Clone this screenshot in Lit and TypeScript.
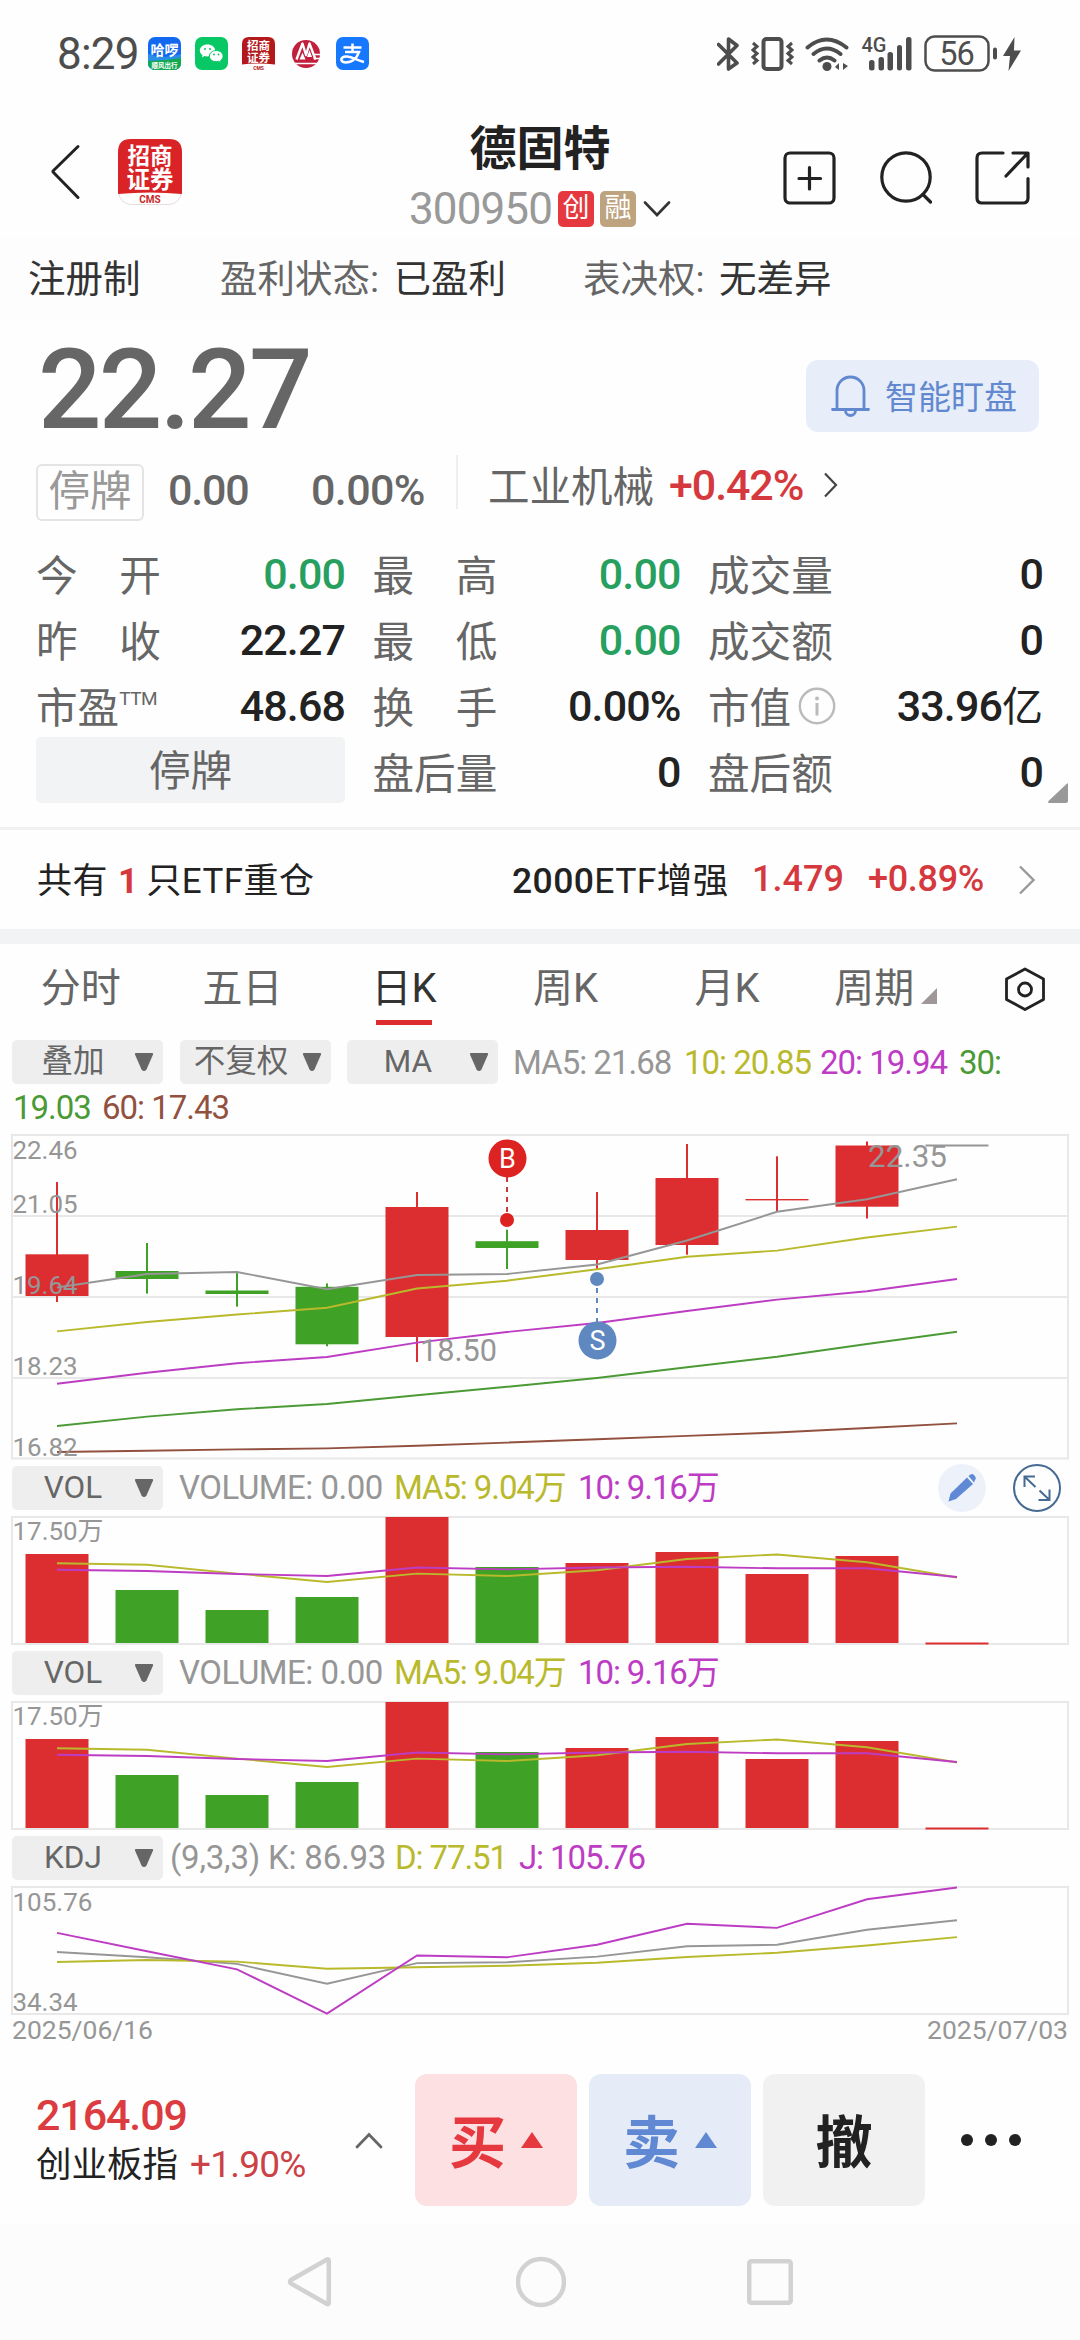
import { LitElement, html, svg, css } from "lit";
import { customElement, property } from "lit/decorators.js";

const RED = "#dc2e30";
const GREEN = "#3fa126";
const GRAY = "#969696";
const YELLOW = "#b9b92c";
const MAGENTA = "#bd3cc4";
const LEAF = "#4b9a36";
const BROWN = "#92503f";
const FRAME = "#e8e8e8";

const FIRST_X = 57;
const STEP = 90;
const HALF = 31.5;

interface Candle {
  high: number;
  low: number;
  top: number;
  bottom: number;
  color: string;
}

const CANDLES: Candle[] = [
  { high: 1182, low: 1302, top: 1254.3, bottom: 1296, color: RED },
  { high: 1243, low: 1293.6, top: 1271, bottom: 1279, color: GREEN },
  { high: 1273, low: 1306.7, top: 1290.5, bottom: 1294, color: GREEN },
  { high: 1283.4, low: 1346.3, top: 1286.8, bottom: 1344.3, color: GREEN },
  { high: 1192, low: 1362, top: 1207, bottom: 1337, color: RED },
  { high: 1229.7, low: 1269, top: 1241.2, bottom: 1248, color: GREEN },
  { high: 1192, low: 1270, top: 1230, bottom: 1260, color: RED },
  { high: 1144, low: 1254.7, top: 1178, bottom: 1245, color: RED },
  { high: 1156.3, low: 1211.4, top: 1199, bottom: 1200.4, color: RED },
  { high: 1141.5, low: 1218.5, top: 1145.5, bottom: 1206.7, color: RED },
];

const MA_LINES: [string, number[]][] = [
  [GRAY, [1287.5, 1274, 1272, 1289.2, 1275, 1274, 1264.5, 1240.5, 1211.8, 1199.3, 1179.3]],
  [YELLOW, [1331.4, 1322, 1314.5, 1307.8, 1288.5, 1280.7, 1269.2, 1256.7, 1250.6, 1237.5, 1226.6]],
  [MAGENTA, [1383.8, 1372.7, 1363.2, 1357, 1342.6, 1332, 1323, 1311, 1299.6, 1291.2, 1279]],
  [LEAF, [1426, 1416.6, 1409.2, 1404, 1395.3, 1386.8, 1378, 1367.2, 1356.8, 1344, 1331.8]],
  [BROWN, [1452, 1450.7, 1449.4, 1448.4, 1445.7, 1442.6, 1439.2, 1435.9, 1432.5, 1428, 1423.4]],
];

/* Volume panel values are offsets below the top edge of the panel frame. */
const VOLUMES: [number, string][] = [
  [37, RED], [73, GREEN], [93, GREEN], [80, GREEN], [0, RED], [50, GREEN],
  [46, RED], [35, RED], [57, RED], [39, RED], [125.5, RED],
];
const VOL_MA5 = [46.3, 47.8, 56.6, 65, 56.6, 59, 53.2, 42, 37.5, 45.2, 60.5];
const VOL_MA10 = [52.8, 54, 57, 59, 50.5, 52.4, 50.5, 49.8, 51.3, 51.3, 60];

const K_LINE = [65, 70.3, 76.9, 96.8, 76.1, 75.3, 69.6, 59.3, 57.7, 42.8, 33.3];
const D_LINE = [75, 73, 74.6, 81.8, 80.3, 78.8, 75.7, 70, 65.8, 58.5, 50.1];
const J_LINE = [45.9, 64.3, 82.3, 126.6, 68.5, 70.3, 57.7, 36.7, 40.9, 12.3, 0.5];

const cx = (i: number) => FIRST_X + STEP * i;
const line = (values: number[], color: string) =>
  svg`<polyline points=${values.map((y, i) => `${cx(i)},${y}`).join(" ")} fill="none" stroke=${color} stroke-width="1.9"/>`;
const label = (x: number, baseline: number, text: string, width: number, size = 26.5) =>
  svg`<text x=${x} y=${baseline} font-size=${size} fill=${GRAY} textLength=${width} lengthAdjust="spacingAndGlyphs">${text}</text>`;

@customElement("price-chart")
class PriceChart extends LitElement {
  static styles = css`
    :host { display: block; }
    svg { display: block; font-family: Roboto, "Noto Sans CJK SC", sans-serif; }
  `;
  render() {
    return html`<svg width="1080" height="332" viewBox="0 1130 1080 332">
      <g stroke=${FRAME} stroke-width="2" fill="none">
        <rect x="12" y="1135" width="1056" height="323.5"/>
        <path d="M12 1216H1068M12 1297H1068M12 1378H1068"/>
      </g>
      ${CANDLES.map((c, i) => svg`
        <rect x=${cx(i) - 1} y=${c.high} width="2" height=${c.low - c.high} fill=${c.color}/>
        <rect x=${cx(i) - HALF} y=${c.top} width=${HALF * 2} height=${c.bottom - c.top} fill=${c.color}/>`)}
      <rect x=${cx(10) - HALF} y="1144.5" width="63" height="2" fill=${GRAY}/>
      ${MA_LINES.map(([color, values]) => line(values, color))}
      ${label(12.5, 1158.5, "22.46", 65)}
      ${label(12.5, 1212.5, "21.05", 65)}
      ${label(12.5, 1293.5, "19.64", 65)}
      ${label(12.5, 1374.5, "18.23", 65)}
      ${label(12.5, 1455.5, "16.82", 65)}
      ${label(420, 1361, "18.50", 77, 32)}
      ${label(868, 1167, "22.35", 79, 32)}
      <path d="M507 1177V1213" stroke="#c83a3a" stroke-width="2" stroke-dasharray="5 5"/>
      <circle cx="507.500" cy="1158.4" r="19" fill="#dd2222"/>
      <circle cx="507" cy="1220" r="7" fill="#dd2222"/>
      <text x="507.500" y="1168" font-size="27" fill="#fff" text-anchor="middle">B</text>
      <path d="M597 1288V1322" stroke="#5f88c0" stroke-width="2" stroke-dasharray="5 5"/>
      <circle cx="597.500" cy="1340.5" r="19" fill="#5f88c0"/>
      <circle cx="597" cy="1279" r="7" fill="#5f88c0"/>
      <text x="597.500" y="1350" font-size="27" fill="#fff" text-anchor="middle">S</text>
    </svg>`;
  }
}

@customElement("volume-chart")
class VolumeChart extends LitElement {
  static styles = css`
    :host { display: block; }
    svg { display: block; font-family: Roboto, "Noto Sans CJK SC", sans-serif; }
  `;
  render() {
    return html`<svg width="1080" height="133" viewBox="0 -3 1080 133">
      <rect x="12" y="0" width="1056" height="127" stroke=${FRAME} stroke-width="2" fill="none"/>
      ${label(12.5, 22.5, "17.50万", 91)}
      ${VOLUMES.map(([top, color], i) => svg`
        <rect x=${cx(i) - HALF} y=${top} width="63" height=${Math.max(126 - top, 2)} fill=${color}/>`)}
      ${line(VOL_MA5, YELLOW)} ${line(VOL_MA10, MAGENTA)}
    </svg>`;
  }
}

@customElement("kdj-chart")
class KdjChart extends LitElement {
  static styles = css`
    :host { display: block; }
    svg { display: block; font-family: Roboto, "Noto Sans CJK SC", sans-serif; }
  `;
  render() {
    return html`<svg width="1080" height="133" viewBox="0 -3 1080 133">
      <rect x="12" y="0" width="1056" height="127" stroke=${FRAME} stroke-width="2" fill="none"/>
      ${label(12.5, 23.5, "105.76", 80)}
      ${label(12.5, 124, "34.34", 65)}
      ${line(K_LINE, GRAY)} ${line(D_LINE, YELLOW)} ${line(J_LINE, MAGENTA)}
    </svg>`;
  }
}

@customElement("drop-select")
class DropSelect extends LitElement {
  @property() label = "";
  static styles = css`
    :host { display: block; flex: none; }
    .box {
      display: flex; align-items: center; width: 151px; height: 44px; box-sizing: border-box;
      padding-right: 9px; border-radius: 5px; background: #eee; color: #666; font-size: 31.500px; letter-spacing: 0;
    }
    .text { flex: 1; text-align: center; white-space: nowrap; line-height: 44px; }
    svg { display: block; flex: none; }
  `;
  render() {
    return html`<div class="box">
      <span class="text">${this.label}</span>
      <svg width="20" height="20" viewBox="0 0 20 20"><path d="M2 1h16q1.5 0 1 1.500l-6.500 15q-2.500 3-5 0l-6.500-15q-.5-1.500 1-1.500z" fill="#666"/></svg>
    </div>`;
  }
}

const QUOTES: { name: string; value: string; green?: boolean; sup?: string; info?: boolean }[][] = [
  [
    { name: "今　开", value: "0.00", green: true },
    { name: "最　高", value: "0.00", green: true },
    { name: "成交量", value: "0" },
  ],
  [
    { name: "昨　收", value: "22.27" },
    { name: "最　低", value: "0.00", green: true },
    { name: "成交额", value: "0" },
  ],
  [
    { name: "市盈", value: "48.68", sup: "TTM" },
    { name: "换　手", value: "0.00%" },
    { name: "市值", value: "33.96亿", info: true },
  ],
  [
    { name: "", value: "停牌" },
    { name: "盘后量", value: "0" },
    { name: "盘后额", value: "0" },
  ],
];

@customElement("app-root")
class AppRoot extends LitElement {
  static styles = css`
    :host {
      display: block; width: 1080px; height: 2340px; overflow: hidden; background: #fefefe; color: #222;
      font-family: Roboto, "Noto Sans CJK SC", sans-serif;
    }
    svg { display: block; flex: none; }
    span { white-space: nowrap; }
    .status { display: flex; align-items: center; height: 107px; padding: 0 59px 0 57px; box-sizing: border-box; }
    .time { width: 91px; font-size: 44px; letter-spacing: -0.8px; color: #4d4d4d; }
    .apps { display: flex; gap: 14px; }
    .sys { display: flex; align-items: center; margin-left: auto; }
    .sys .vib { margin-left: 12px; }
    .sys .wifi { margin-left: 11px; }
    .sys .sig { margin-left: 12px; }
    .sys .bat { margin-left: 12px; }
    .sys .bolt { margin-left: 6px; }

    .header { display: grid; grid-template-columns: 390px 300px 390px; height: 130px; }
    .h-left { display: flex; align-items: center; padding-left: 50px; padding-bottom: 3px; gap: 37px; }
    .h-mid { display: flex; flex-direction: column; align-items: center; }
    .title { font-size: 47px; font-weight: 700; line-height: 60px; margin-top: 12px; }
    .code { display: flex; align-items: center; height: 60px; color: #999; }
    .code .num { font-size: 44px; letter-spacing: -0.9px; width: 149px; }
    .tag { width: 36px; height: 36px; border-radius: 5px; color: #fff; font-size: 27px; line-height: 34px; text-align: center; }
    .tag.red { background: #e5393f; }
    .tag.tan { background: #bda37e; margin-left: 6px; margin-right: 7px; }
    .h-right { display: flex; align-items: center; padding: 9px 0 0 92px; gap: 42px; }

    .facts { display: flex; align-items: center; height: 82px; padding-bottom: 5px; box-sizing: border-box; background: #fdfdfd; font-size: 37.5px; color: #333; }
    .facts .f1 { width: 192px; padding-left: 28px; box-sizing: content-box; }
    .facts .f2 { width: 363px; }
    .facts i { font-style: normal; color: #666; margin-right: 5px; }

    .price-row { display: flex; justify-content: space-between; align-items: flex-start; height: 131px; padding: 31px 41px 0 36px; box-sizing: border-box; }
    .price { font-size: 112px; line-height: 80px; font-weight: 500; letter-spacing: -2.8px; color: #666; margin-left: 2px; }
    .watch { display: flex; align-items: center; gap: 14px; width: 233px; height: 72px; margin-top: 10px; padding-left: 24px; box-sizing: border-box; border-radius: 12px; background: #e7edf9; color: #6289d0; font-size: 33px; }
    .watch span { padding-bottom: 3px; }

    .change { display: flex; align-items: center; height: 80px; padding-left: 36px; color: #666; font-size: 43px; font-weight: 500; }
    .halt { width: 108px; height: 57px; box-sizing: border-box; border: 2.5px solid #e4e4e4; border-radius: 6px; margin-top: 5px; text-align: center; line-height: 51px; font-size: 41.500px; color: #999; font-weight: 400; }
    .change .abs { width: 143px; margin-left: 24px; letter-spacing: -1.2px; }
    .change .pct { width: 145px; letter-spacing: -0.6px; }
    .bar { width: 2px; height: 54px; background: #eee; margin-bottom: 16px; }
    .sector { display: flex; align-items: center; margin: 0 0 10px 30px; font-weight: 400; font-size: 41.500px; }
    .sector span { margin-bottom: 3px; }
    .sector b { font-weight: 500; color: #d5393e; font-size: 43px; width: 154px; margin-left: 15px; letter-spacing: -1.1px; }

    .quotes { position: relative; display: grid; grid-template-columns: 309px 308px 335px; column-gap: 27.5px; grid-auto-rows: 66px; padding: 11px 36px 22px; border-bottom: 3px solid #f1f1f1; }
    .q { display: flex; align-items: center; justify-content: space-between; font-size: 41.600px; color: #666; }
    .q .name { display: flex; align-items: center; margin-bottom: 3px; }
    .q .sup { font-size: 19px; letter-spacing: -0.5px; margin-bottom: 12px; }
    .q .info { margin-left: 7px; margin-top: 3px; }
    .q .val { font-size: 43px; line-height: 66px; font-weight: 500; color: #222; letter-spacing: -0.9px; }
    .q .val i { font-style: normal; font-weight: 400; font-size: 41px; line-height: 40px; letter-spacing: 0; }
    .q .green { color: #279f5f; }
    .q.halted { justify-content: center; background: #f2f3f5; border-radius: 5px; padding-bottom: 5px; margin: -2px 0 2px; box-sizing: border-box; }
    .corner { position: absolute; right: 12px; top: 253px; }

    .etf { display: flex; align-items: center; height: 99px; font-size: 35px; padding-left: 37px; box-sizing: border-box; }
    .etf .l, .etf .n { padding-bottom: 4px; letter-spacing: 0.4px; }
    .etf .l { width: 475px; }
    .etf .l b { color: #d5393e; font-weight: 700; margin: 0 -1px 0 1px; }
    .etf .n { width: 240px; font-size: 35.500px; letter-spacing: 0.4px; }
    .etf .n b { font-weight: 500; }
    .etf .p { width: 116px; color: #d5393e; font-weight: 500; font-size: 36px; }
    .etf .c { width: 150px; color: #d5393e; font-weight: 500; font-size: 36px; letter-spacing: -0.3px; }
    .etf .p, .etf .c { padding-bottom: 2px; }
    .band { height: 15px; background: #f2f3f5; }

    .tabs { display: grid; grid-template-columns: repeat(6, 161.600px) 1fr; height: 88px; }
    .tab { display: flex; flex-direction: column; align-items: center; color: #666; font-size: 40px; line-height: 89px; }
    .tab.on { color: #333; }
    .tab .rule { width: 56px; height: 4.500px; background: #dc2c30; margin-top: -13px; }
    .tab.more { flex-direction: row; justify-content: center; align-items: center; gap: 7px; padding-right: 6px; }
    .tab.more svg { margin-top: 15px; }
    .gear { display: flex; align-items: center; padding-left: 34px; }

    .ma { display: grid; grid-template-columns: 168px 167px 166px 171px 136px 139px 1fr; padding: 7px 0 0 12px; height: 98px; box-sizing: border-box; grid-template-rows: 46px 45px; align-items: center; font-size: 33px; letter-spacing: -1px; }
    .ma .wrap { grid-column: 1 / -1; padding-left: 1px; }
    .ma .wrap span { display: inline-block; width: 89px; }
    .gray { color: #969696; }
    .yellow { color: #b9b92c; }
    .magenta { color: #bd3cc4; }
    .leaf { color: #4b9a36; }
    .brown { color: #92503f; }

    .ind { display: grid; grid-template-columns: 167px 215px 184px 1fr auto auto; align-items: center; height: 52px; padding: 0 19px 0 12px; font-size: 33px; line-height: 52px; letter-spacing: -0.5px; }
    .ind .yellow, .ind .magenta { letter-spacing: -1.1px; }
    .ind.kdj { grid-template-columns: 158px 225px 124px 1fr; }
    .ind.kdj .gray { letter-spacing: -0.2px; }
    .ind .pen { margin-right: 27px; }
    .dates { display: flex; justify-content: space-between; height: 25px; line-height: 25px; padding: 0 12px; font-size: 26.500px; color: #969696; }

    .trade { display: flex; align-items: center; height: 182px; padding: 14px 0 0 36px; box-sizing: border-box; }
    .index { width: 319px; }
    .index .v { display: block; font-size: 43px; font-weight: 500; color: #dc3c40; line-height: 54px; letter-spacing: -1.1px; }
    .index .d { display: block; font-size: 35.500px; line-height: 46px; padding-bottom: 4px; }
    .index .d i { font-style: normal; color: #cc4145; margin-left: 12px; font-size: 37px; letter-spacing: -0.8px; }
    .btn { display: flex; align-items: center; justify-content: center; gap: 15px; width: 162px; height: 132px; border-radius: 12px; font-size: 57px; font-weight: 700; margin-right: 12px; }
    .btn span { padding-bottom: 4px; }
    .btn.buy { background: #fde0e2; color: #e5393f; margin-left: 32px; }
    .btn.sell { background: #e5ecf8; color: #6188d3; }
    .btn.undo { background: #f1f1f1; color: #222; }
    .more-dots { margin-left: 24px; }
    .nav { display: flex; align-items: center; height: 116px; background: #fcfcfc; padding-left: 287px; }
    .nav .home { margin-left: 183px; }
    .nav .recent { margin-left: 181px; }
  `;

  private status() {
    return html`<div class="status">
      <span class="time">8:29</span>
      <div class="apps">
        <svg width="33" height="33" viewBox="0 0 33 33">
          <defs><clipPath id="r"><rect width="33" height="33" rx="7"/></clipPath></defs>
          <g clip-path="url(#r)"><rect width="33" height="33" fill="#1268ee"/><path d="M0 17q16 6 33 0v16H0z" fill="#2b8fe8"/><path d="M0 24q16 0 33-3v12H0z" fill="#12a94f"/></g>
          <text x="16.500" y="18" font-size="14" font-weight="700" fill="#fff" text-anchor="middle">哈啰</text>
          <text x="16.500" y="31" font-size="6.500" font-weight="700" fill="#fff" text-anchor="middle">顺风出行</text>
        </svg>
        <svg width="33" height="33" viewBox="0 0 33 33">
          <rect width="33" height="33" rx="7" fill="#08c865"/>
          <path d="M12.500 7.500c-4.500 0-7.700 2.700-7.700 6 0 1.900 1 3.500 2.700 4.600l-.7 2.300 2.700-1.300c4 1.200 10.500-.8 10.700-5.600 0-3.300-3.300-6-7.700-6z" fill="#fff"/>
          <path d="M21.300 13.500c-4 0-6.900 2.500-6.900 5.600s2.900 5.600 6.900 5.600c.9 0 1.700-.1 2.400-.3l2.400 1.200-.6-2c1.600-1 2.600-2.600 2.600-4.500 0-3.100-3-5.600-6.800-5.600z" fill="#fff" stroke="#08c865" stroke-width="1"/>
          <g fill="#08c865"><circle cx="10" cy="12" r="1"/><circle cx="15" cy="12" r="1"/><circle cx="19" cy="17.500" r=".9"/><circle cx="23.500" cy="17.500" r=".9"/></g>
        </svg>
        <svg width="33" height="33" viewBox="0 0 33 33">
          <path d="M7 0h19q7 0 7 7v20.500q-16.500-2-33 0V7Q0 0 7 0z" fill="#b3181a"/>
          <text x="16.500" y="13" font-size="11.500" font-weight="700" fill="#fff" text-anchor="middle">招商</text>
          <text x="16.500" y="24.500" font-size="11.500" font-weight="700" fill="#fff" text-anchor="middle">证券</text>
          <text x="16.500" y="32.500" font-size="5" font-weight="700" fill="#b3181a" text-anchor="middle">CMS</text>
        </svg>
        <svg width="33" height="33" viewBox="0 0 33 33">
          <circle cx="17" cy="17" r="14" fill="#c11f3c"/>
          <path d="M7.500 22.500 13.500 6.500 17 18 20.500 6.500 26.500 22.500" stroke="#fff" stroke-width="2.400" fill="none" stroke-linejoin="round"/>
          <path d="M10.500 22.500l3-7 3 7zM18 20l2.500-7 2.500 7z" fill="#fff"/>
          <path d="M6 26.500h22M24.500 17.500H32M24.500 21.500H32" stroke="#fff" stroke-width="1.600" fill="none"/>
        </svg>
        <svg width="33" height="33" viewBox="0 0 33 33">
          <rect width="33" height="33" rx="7" fill="#1677ff"/>
          <path d="M7.500 10.500h18M16.500 6.500v8.500M9 15h14c-2 6-7 10.500-13.500 10.500-6.500-.5-5-6.500 1.500-6 6 .5 10 4 17 5.500" stroke="#fff" stroke-width="2.500" fill="none"/>
        </svg>
      </div>
      <div class="sys">
        <svg width="22" height="34" viewBox="0 0 22 34"><path d="M1.500 7.500 20 26l-8.500 6V2L20 8.500 1.500 27" fill="none" stroke="#4d4d4d" stroke-width="3.600" stroke-linejoin="round" stroke-linecap="round"/></svg>
        <svg class="vib" width="43" height="34" viewBox="0 0 43 34" fill="none" stroke="#4d4d4d"><rect x="12.500" y="2" width="18" height="30" rx="3" stroke-width="4"/><path d="M2 6l4 3.500-4 3.500 4 3.500-4 3.500 4 3.500-4 3.500M41 6l-4 3.500 4 3.500-4 3.500 4 3.500-4 3.500 4 3.500" stroke-width="3"/></svg>
        <svg class="wifi" width="44" height="34" viewBox="0 0 44 34" fill="none" stroke="#4d4d4d" stroke-width="3.900" stroke-linecap="round"><path d="M2.500 10.500q19-16 39 0M8.500 17q13-11 27 0M14.500 23.500q7.500-6 15 0"/><circle cx="22" cy="29.500" r="4.500" fill="#4d4d4d" stroke="none"/><path d="M34 26v7l-4-3zM38 33v-7l5 3z" fill="#4d4d4d" stroke="none"/></svg>
        <svg class="sig" width="51" height="55" viewBox="-1 -10 51 55" fill="#4d4d4d"><text x="-0.500" y="16" font-size="21" font-weight="500" textLength="25" lengthAdjust="spacingAndGlyphs">4G</text><rect x="7" y="24" width="5.500" height="10.500" rx="2.500"/><rect x="16.500" y="21" width="5.500" height="13.500" rx="2.500"/><rect x="25.500" y="16" width="5.500" height="18.500" rx="2.500"/><rect x="35" y="9" width="5" height="25.500" rx="2.500"/><rect x="44" y="1" width="5.500" height="33.500" rx="2.500"/></svg>
        <svg class="bat" width="73" height="37" viewBox="0 0 73 37"><rect x="1.500" y="1.500" width="63" height="34" rx="9" fill="none" stroke="#4d4d4d" stroke-width="2.500"/><rect x="69" y="12.500" width="4" height="12" rx="2" fill="#4d4d4d"/><text x="32.500" y="30" font-size="32.500" fill="#4d4d4d" text-anchor="middle" letter-spacing="-1">56</text></svg>
        <svg class="bolt" width="18" height="34" viewBox="0 0 18 34"><path d="M11.500 0 0 19h7l-1.500 15L18 13.500h-7z" fill="#4d4d4d"/></svg>
      </div>
    </div>`;
  }

  private header() {
    return html`<div class="header">
      <div class="h-left">
        <svg width="31" height="56" viewBox="0 0 31 56"><path d="M28 2.500 3.500 26.500q-1 1 0 2L28 53.500" fill="none" stroke="#222" stroke-width="3" stroke-linecap="round"/></svg>
        <svg width="64" height="66" viewBox="0 0 64 66">
          <rect x=".5" y=".5" width="63" height="65" rx="13" fill="#fff" stroke="#e2dcdc"/>
          <path d="M13 0h38q13 0 13 13v42q-32-3-64 0V13Q0 0 13 0z" fill="#d92326"/>
          <text x="32" y="25" font-size="22.500" font-weight="700" fill="#fff" text-anchor="middle">招商</text>
          <text x="32" y="48.500" font-size="23.500" font-weight="700" fill="#fff" text-anchor="middle">证券</text>
          <text x="32" y="63.500" font-size="10" font-weight="700" fill="#c8282b" text-anchor="middle">CMS</text>
        </svg>
      </div>
      <div class="h-mid">
        <span class="title">德固特</span>
        <div class="code">
          <span class="num">300950</span>
          <span class="tag red">创</span><span class="tag tan">融</span>
          <svg width="28" height="16" viewBox="0 0 28 16"><path d="M2 1.500 14 14 26 1.500" fill="none" stroke="#333" stroke-width="2.600" stroke-linecap="round"/></svg>
        </div>
      </div>
      <div class="h-right">
        <svg width="54" height="54" viewBox="0 0 54 54" fill="none" stroke="#222" stroke-width="3.200" stroke-linecap="round"><rect x="3" y="2" width="49" height="50" rx="5"/><path d="M27.500 16.500v21.500M17 27.500h21.500"/></svg>
        <svg width="54" height="54" viewBox="0 0 54 54" fill="none" stroke="#222" stroke-width="3.200" stroke-linecap="round"><circle cx="28" cy="26" r="24.200"/><path d="M45 43.500l7.500 7.500"/></svg>
        <svg width="56" height="54" viewBox="0 0 56 54" fill="none" stroke="#222" stroke-width="3.200" stroke-linecap="round" stroke-linejoin="round"><path d="M29 2H8Q3 2 3 7v40q0 5 5 5h41q5 0 5-5V27.500M39 2h15v14M53 3 32 25"/></svg>
      </div>
    </div>`;
  }

  private quotes() {
    return html`<div class="quotes">
      ${QUOTES.flat().map((q) =>
        q.name === ""
          ? html`<div class="q halted"><span>${q.value}</span></div>`
          : html`<div class="q">
              <span class="name">${q.name}${q.sup ? html`<span class="sup">${q.sup}</span>` : ""}${q.info
                ? html`<svg class="info" width="38" height="38" viewBox="0 0 38 38"><circle cx="19" cy="19" r="17.200" fill="none" stroke="#bbb" stroke-width="2.400"/><circle cx="19" cy="11.500" r="2" fill="#bbb"/><path d="M19 16v12.500" stroke="#bbb" stroke-width="3"/></svg>`
                : ""}</span>
              <span class=${q.green ? "val green" : "val"}>${q.value.replace("亿", "")}${q.value.endsWith("亿") ? html`<i>亿</i>` : ""}</span>
            </div>`
      )}
      <svg class="corner" width="20" height="20" viewBox="0 0 20 20"><path d="M1 20h17q2 0 2-2V1q0-1.500-1.500 0L.5 18q-1 2 .5 2z" fill="#999"/></svg>
    </div>`;
  }

  private volumeHead(tools: boolean) {
    return html`<div class="ind">
      <drop-select label="VOL"></drop-select>
      <span class="gray">VOLUME: 0.00</span>
      <span class="yellow">MA5: 9.04万</span>
      <span class="magenta">10: 9.16万</span>
      ${tools
        ? html`<svg class="pen" width="48" height="48" viewBox="0 0 48 48"><circle cx="24" cy="24" r="24" fill="#edf1fa"/><path d="M10.500 37.500l2-8L29 13.500l6 6.500-17 15zM30.500 12l2-1.500q2-1 3.500.5l1.500 2q1 1.500-.5 3L36 18.500z" fill="#5f88d5"/></svg>
            <svg width="48" height="48" viewBox="0 0 48 48" fill="none" stroke="#456b92" stroke-width="2"><circle cx="24" cy="24" r="23"/><path d="M22 12.500H11.500V23M12 13l10.500 10M36.500 25.500V36H25.500M36 35.500 26.500 26.500"/></svg>`
        : ""}
    </div>`;
  }

  render() {
    return html`
      ${this.status()} ${this.header()}
      <div class="facts">
        <span class="f1">注册制</span>
        <span class="f2"><i>盈利状态:</i> 已盈利</span>
        <span><i>表决权:</i> 无差异</span>
      </div>
      <div class="price-row">
        <span class="price">22.27</span>
        <div class="watch">
          <svg width="41" height="42" viewBox="0 0 41 42" fill="none" stroke="#6289d0" stroke-width="2.800" stroke-linecap="round"><path d="M2.500 34.500h36M7 34V15.500a13.500 13.500 0 0 1 27 0V34M15.500 35.500a5 5 0 0 0 10 0"/></svg>
          <span>智能盯盘</span>
        </div>
      </div>
      <div class="change">
        <span class="halt">停牌</span>
        <span class="abs">0.00</span>
        <span class="pct">0.00%</span>
        <div class="bar"></div>
        <div class="sector">
          <span>工业机械</span><b>+0.42%</b>
          <svg width="15" height="26" viewBox="0 0 15 26"><path d="M2 1.500 13 13 2 24.500" fill="none" stroke="#444" stroke-width="2.200"/></svg>
        </div>
      </div>
      ${this.quotes()}
      <div class="etf">
        <span class="l">共有 <b>1</b> 只ETF重仓</span>
        <span class="n"><b>2000</b>ETF增强</span>
        <span class="p">1.479</span>
        <span class="c">+0.89%</span>
        <svg width="18" height="30" viewBox="0 0 18 30"><path d="M2 1.500 15.500 15 2 28.500" fill="none" stroke="#999" stroke-width="2.400"/></svg>
      </div>
      <div class="band"></div>
      <div class="tabs">
        <div class="tab"><span>分时</span></div>
        <div class="tab"><span>五日</span></div>
        <div class="tab on"><span>日K</span><div class="rule"></div></div>
        <div class="tab"><span>周K</span></div>
        <div class="tab"><span>月K</span></div>
        <div class="tab more"><span>周期</span><svg width="16" height="16" viewBox="0 0 16 16"><path d="M16 0v16H0z" fill="#a09898"/></svg></div>
        <div class="gear"><svg width="42" height="44" viewBox="0 0 42 44" fill="none" stroke="#222" stroke-width="2.800" stroke-linejoin="round"><path d="M21 2 39.500 12V32.500L21 42.500 2.500 32.500V12z"/><circle cx="21" cy="22.500" r="6.500"/></svg></div>
      </div>
      <div class="ma">
        <drop-select label="叠加"></drop-select>
        <drop-select label="不复权"></drop-select>
        <drop-select label="MA"></drop-select>
        <span class="gray">MA5: 21.68</span>
        <span class="yellow">10: 20.85</span>
        <span class="magenta">20: 19.94</span>
        <span class="leaf">30:</span>
        <div class="wrap"><span class="leaf">19.03</span><span class="brown">60: 17.43</span></div>
      </div>
      <price-chart></price-chart>
      ${this.volumeHead(true)}
      <volume-chart></volume-chart>
      ${this.volumeHead(false)}
      <volume-chart></volume-chart>
      <div class="ind kdj">
        <drop-select label="KDJ"></drop-select>
        <span class="gray">(9,3,3) K: 86.93</span>
        <span class="yellow">D: 77.51</span>
        <span class="magenta">J: 105.76</span>
      </div>
      <kdj-chart></kdj-chart>
      <div class="dates"><span>2025/06/16</span><span>2025/07/03</span></div>
      <div class="trade">
        <div class="index"><span class="v">2164.09</span><span class="d">创业板指<i>+1.90%</i></span></div>
        <svg width="28" height="17" viewBox="0 0 28 17"><path d="M2 15 14 2.500 26 15" fill="none" stroke="#666" stroke-width="2.800" stroke-linecap="round"/></svg>
        <div class="btn buy"><span>买</span><svg width="22" height="16" viewBox="0 0 22 16"><path d="M11 0 22 16H0z" fill="#e5393f"/></svg></div>
        <div class="btn sell"><span>卖</span><svg width="22" height="16" viewBox="0 0 22 16"><path d="M11 0 22 16H0z" fill="#6188d3"/></svg></div>
        <div class="btn undo"><span>撤</span></div>
        <svg class="more-dots" width="60" height="12" viewBox="0 0 60 12" fill="#222"><circle cx="6" cy="6" r="6"/><circle cx="30" cy="6" r="6"/><circle cx="54" cy="6" r="6"/></svg>
      </div>
      <div class="nav">
        <svg width="46" height="52" viewBox="0 0 46 52"><path d="M40 3.500 4 24q-2 1.500 0 3.500L40 48q1.800.8 1.800-1.500V5q0-2.300-1.800-1.500z" fill="none" stroke="#d2d2d2" stroke-width="4.500"/></svg>
        <svg class="home" width="50" height="52" viewBox="0 0 50 52"><circle cx="25" cy="26" r="23" fill="none" stroke="#d2d2d2" stroke-width="4.500"/></svg>
        <svg class="recent" width="46" height="46" viewBox="0 0 46 46"><rect x="2.200" y="2.200" width="41.500" height="41.500" rx="2" fill="none" stroke="#d2d2d2" stroke-width="4.500"/></svg>
      </div>
    `;
  }
}
